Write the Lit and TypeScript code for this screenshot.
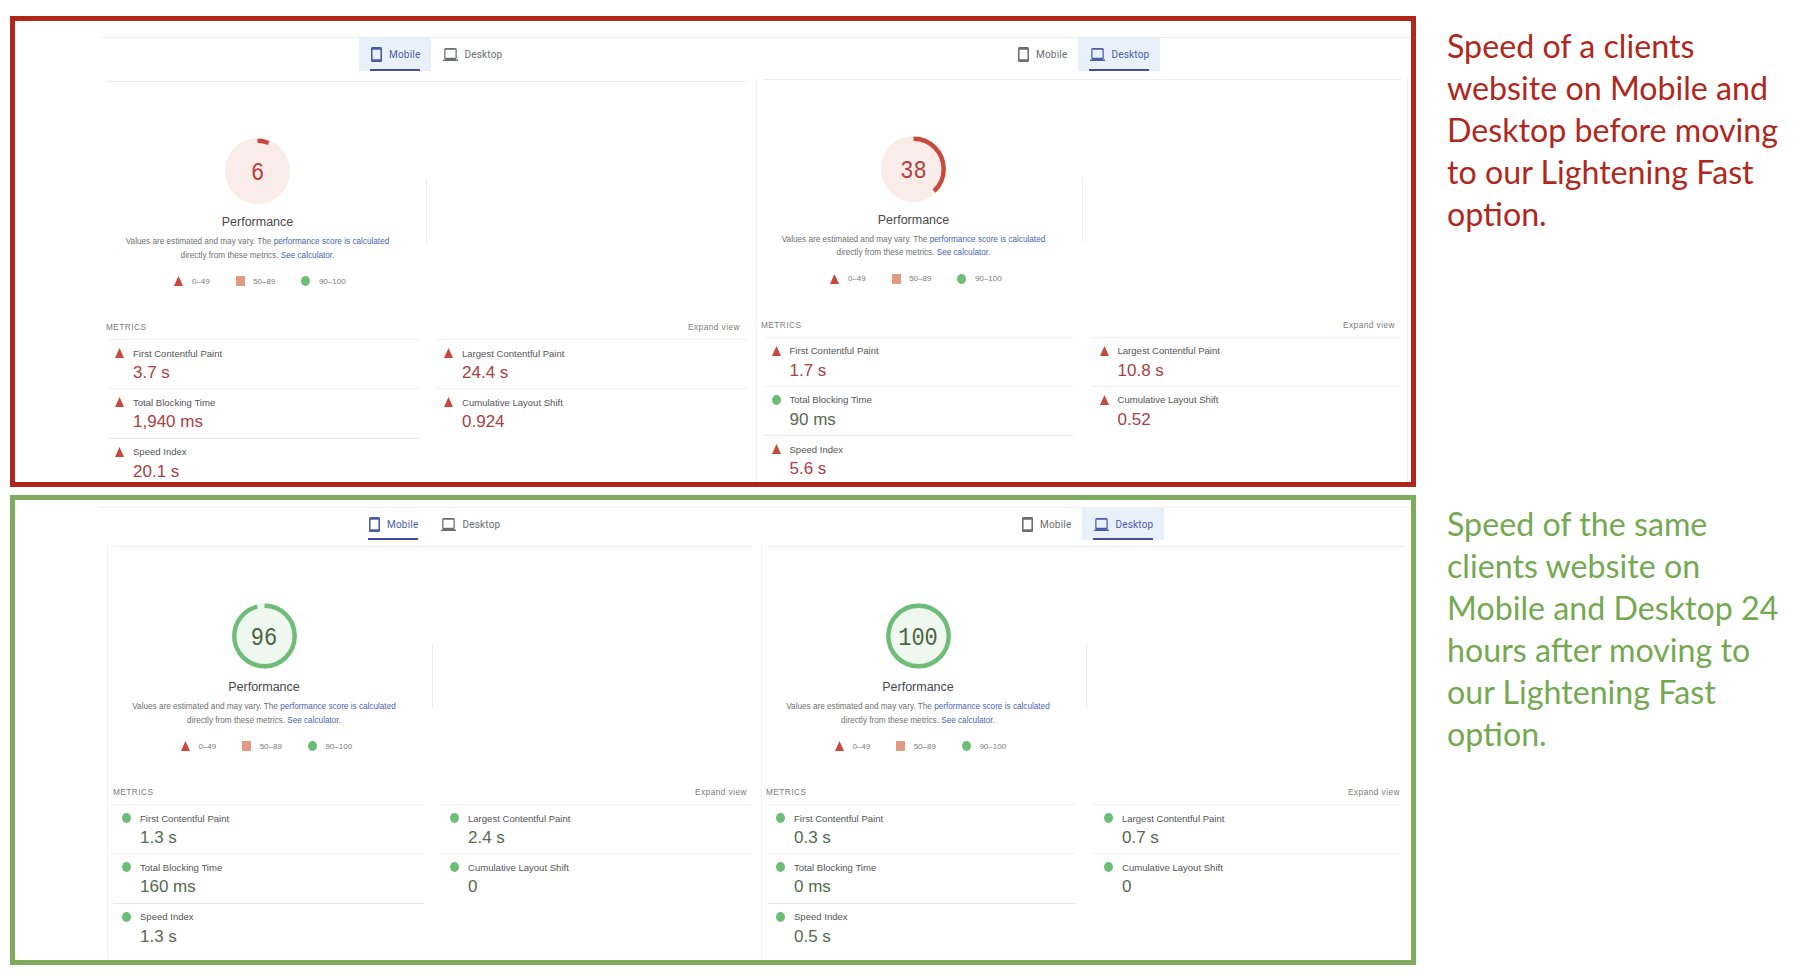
import { LitElement, html, css, svg } from 'lit';
import { customElement, property } from 'lit/decorators.js';

type Status = 'fail' | 'pass';
interface Metric { label: string; value: string; status: Status; }
interface Report { variant: string; device: 'mobile' | 'desktop'; score: number; metrics: Metric[]; }

const fail = (label: string, value: string): Metric => ({ label, value, status: 'fail' });
const pass = (label: string, value: string): Metric => ({ label, value, status: 'pass' });

const NAMES = ['First Contentful Paint', 'Largest Contentful Paint', 'Total Blocking Time', 'Cumulative Layout Shift', 'Speed Index'];

const BEFORE: Report[] = [
  { variant: 'r1', device: 'mobile', score: 6, metrics: ['3.7 s', '24.4 s', '1,940 ms', '0.924', '20.1 s'].map((v, i) => fail(NAMES[i], v)) },
  {
    variant: 'r2', device: 'desktop', score: 38,
    metrics: [fail(NAMES[0], '1.7 s'), fail(NAMES[1], '10.8 s'), pass(NAMES[2], '90 ms'), fail(NAMES[3], '0.52'), fail(NAMES[4], '5.6 s')],
  },
];
const AFTER: Report[] = [
  { variant: 'g1', device: 'mobile', score: 96, metrics: ['1.3 s', '2.4 s', '160 ms', '0', '1.3 s'].map((v, i) => pass(NAMES[i], v)) },
  { variant: 'g2', device: 'desktop', score: 100, metrics: ['0.3 s', '0.7 s', '0 ms', '0', '0.5 s'].map((v, i) => pass(NAMES[i], v)) },
];

const triangle = html`<svg class="mark" viewBox="0 0 9 10"><polygon points="4.5,0 9,10 0,10" fill="#c8483c"></polygon></svg>`;
const square = html`<svg class="mark" viewBox="0 0 9 10"><rect width="9" height="10" fill="#e09b82"></rect></svg>`;
const circle = html`<svg class="mark" viewBox="0 0 9 10"><ellipse cx="4.5" cy="5" rx="4.5" ry="5" fill="#6cbd78"></ellipse></svg>`;

const phoneIcon = svg`<svg class="phone" viewBox="5 1 14 22" preserveAspectRatio="none"><path fill="currentColor" d="M17 1.01L7 1c-1.1 0-2 .9-2 2v18c0 1.1.9 2 2 2h10c1.1 0 2-.9 2-2V3c0-1.1-.9-1.99-2-1.99zM17 19H7V5h10v14z"></path></svg>`;
const laptopIcon = svg`<svg class="laptop" viewBox="0 4 24 16" preserveAspectRatio="none"><path fill="currentColor" d="M20 18c1.1 0 1.99-.9 1.99-2L22 6c0-1.1-.9-2-2-2H4c-1.1 0-2 .9-2 2v10c0 1.1.9 2 2 2H0v2h24v-2h-4zM4 6h16v10H4V6z"></path></svg>`;

@customElement('psi-report')
export class PsiReport extends LitElement {
  static styles = css`
    :host { display: block; font-family: "Liberation Sans", Arial, sans-serif; }

    .report { height: 100%; }
    .r1 { width: 741px; --tabs-x: 344px; --tabs-h: 33px; --body-x: 91px; --body-w: 650px; --rule-top: 10px; --rule-l: 0px; --rule-w: 639px; --score-x: 0.5px; --head-l: -1px; --grid-l: 1px; --col: 312px; --gap: 16px; --pad: 7px; --pad2: 8px; }
    .r2 { width: 655px; --tabs-x: 250px; --tabs-h: 33px; --body-x: 0px; --body-w: 652px; --rule-top: 7.5px; --rule-l: 6px; --rule-w: 638px; --score-x: 6.5px; --head-l: 4px; --grid-l: 7.5px; --col: 308px; --gap: 19.5px; --pad: 7px; --pad2: 7.5px; }
    .g1 { width: 746px; --tabs-x: 342px; --tabs-h: 32px; --body-x: 92px; --body-w: 654px; --rule-top: 6px; --rule-l: 5px; --rule-w: 639px; --score-x: 6px; --head-l: 5px; --grid-l: 5px; --col: 311px; --gap: 16px; --pad: 9px; --pad2: 10px; }
    .g2 { width: 650px; --tabs-x: 249px; --tabs-h: 32px; --body-x: 0px; --body-w: 650px; --rule-top: 6px; --rule-l: 6px; --rule-w: 637px; --score-x: 6px; --head-l: 4px; --grid-l: 6px; --col: 308px; --gap: 17px; --pad: 8px; --pad2: 11px; }

    .tabs { display: flex; height: var(--tabs-h); margin-left: var(--tabs-x); }
    .tab {
      position: relative;
      display: flex;
      align-items: center;
      box-sizing: border-box;
      padding: 0 11px 0 12px;
      font-family: Roboto, sans-serif;
      font-size: 10px;
      letter-spacing: 0.2px;
      color: #6a6d72;
    }
    .tab.on { color: #4c5da8; background: #e8f0fa; }
    .g1 .tab.on { background: none; }
    .tab.on::after { content: ""; position: absolute; left: 11px; right: 11px; bottom: 0; height: 2.5px; background: #44509b; }
    .phone { width: 11px; height: 15px; margin-right: 7px; }
    .laptop { width: 15px; height: 13px; margin-right: 6px; }

    .body {
      box-sizing: border-box;
      width: var(--body-w);
      margin-left: var(--body-x);
      height: 500px;
      border-left: 1px solid #f1f1f3;
    }
    .r1 .body { border-left-color: #fff; }
    .r2 .body { border-right: 1px solid #eef0f4; }
    .rule {
      width: var(--rule-w);
      height: 1px;
      margin: var(--rule-top) 0 0 var(--rule-l);
      background: #ececec;
    }

    .summary { display: flex; margin-left: var(--score-x); }
    .score { width: 300px; flex: none; display: flex; flex-direction: column; align-items: center; padding-top: 56px; }
    .divider { width: 1px; height: 64px; margin: 97px 0 0 18px; background: #ececec; }

    .gauge { position: relative; width: 65px; height: 66px; }
    .gauge svg { display: block; width: 65px; height: 66px; }
    .gauge span {
      position: absolute;
      inset: 5px 0 0;
      display: flex;
      align-items: center;
      justify-content: center;
      font-family: "Liberation Mono", monospace;
      font-size: 22px;
      transform: scaleY(1.17);
    }
    .gauge.fail span { color: #b4403f; }
    .gauge.pass span { color: #4a6642; }

    .title { margin-top: 10px; font-size: 12.5px; line-height: 16px; color: #4a4a4a; }
    .desc { margin-top: 5px; font-size: 8.2px; line-height: 13.5px; text-align: center; color: #707070; white-space: nowrap; }
    .desc a { color: #4a63b0; text-decoration: none; }

    .legend { display: flex; align-items: center; height: 12px; margin-top: 13px; padding-left: 5px; font-size: 8px; color: #7a7a7a; }
    .legend div { display: flex; align-items: center; gap: 8.5px; margin-right: 26px; }
    .legend div:last-child { margin-right: 0; }
    .mark { display: block; width: 9px; height: 10px; flex: none; }

    .head {
      display: flex;
      justify-content: space-between;
      width: 634px;
      height: 12px;
      margin: 34px 0 6px var(--head-l);
      font-size: 8.3px;
      line-height: 12px;
      letter-spacing: 0.45px;
      color: #7c7c7c;
    }
    .grid {
      display: grid;
      grid-template-columns: var(--col) var(--col);
      grid-auto-rows: 49.33px;
      column-gap: var(--gap);
      margin: 0 0 0 var(--grid-l);
    }
    .metric {
      box-sizing: border-box;
      padding: 7px 0 0 var(--pad);
      border-top: 1px solid #f0f0f0;
    }
    .metric:nth-child(even) { padding-left: var(--pad2); }
    .metric:nth-child(n + 5) { border-top-color: #e8e8e8; }
    .name { display: flex; align-items: center; gap: 9px; height: 12px; font-size: 9.55px; color: #555; white-space: nowrap; }
    .value { margin: 4px 0 0 18px; font-size: 17px; line-height: 20px; white-space: nowrap; }
    .fail .value { color: #aa4044; }
    .pass .value { color: #556b4f; }
  `;

  @property({ type: Object }) report!: Report;

  private _gauge() {
    const { score } = this.report;
    const tone = score >= 90 ? 'pass' : 'fail';
    const r = 30.2;
    const len = 2 * Math.PI * r;
    const stroke = tone === 'pass' ? '#6fbc78' : '#c9493c';
    const fill = tone === 'pass' ? '#eef8ef' : '#f9ece9';
    return html`<div class="gauge ${tone}">
      <svg viewBox="0 0 65 66">
        <ellipse cx="32.5" cy="33" rx="32.5" ry="33" fill=${fill}></ellipse>
        <circle cx="32.5" cy="33" r=${r} fill="none" stroke=${stroke} stroke-width="4.4"
          stroke-dasharray="${(len * score) / 100} ${len}" transform="rotate(-90 32.5 33)"></circle>
      </svg>
      <span>${score}</span>
    </div>`;
  }

  render() {
    const { variant, device, metrics } = this.report;
    return html`
      <div class="report ${variant}">
        <div class="tabs">
          <div class="tab ${device === 'mobile' ? 'on' : ''}">${phoneIcon}Mobile</div>
          <div class="tab ${device === 'desktop' ? 'on' : ''}">${laptopIcon}Desktop</div>
        </div>
        <div class="body">
          <div class="rule"></div>
          <div class="summary">
            <div class="score">
              ${this._gauge()}
              <div class="title">Performance</div>
              <div class="desc">
                Values are estimated and may vary. The <a>performance score is calculated</a><br />
                directly from these metrics. <a>See calculator.</a>
              </div>
              <div class="legend">
                <div>${triangle}0–49</div>
                <div>${square}50–89</div>
                <div>${circle}90–100</div>
              </div>
            </div>
            <div class="divider"></div>
          </div>
          <div class="head"><span>METRICS</span><span>Expand view</span></div>
          <div class="grid">
            ${metrics.map(
              (m) => html`<div class="metric ${m.status}">
                <div class="name">${m.status === 'fail' ? triangle : circle}${m.label}</div>
                <div class="value">${m.value}</div>
              </div>`
            )}
          </div>
        </div>
      </div>
    `;
  }
}

@customElement('app-root')
export class AppRoot extends LitElement {
  static styles = css`
    :host { display: block; width: 1800px; height: 979px; background: #fff; overflow: hidden; }

    .page { display: flex; flex-direction: column; gap: 8px; padding: 16px 0 0 10px; }
    .band { display: flex; }

    .frame {
      box-sizing: border-box;
      width: 1406px;
      border: 5px solid;
      overflow: hidden;
    }
    .before .frame { height: 471px; border-color: #b1261b; }
    .after .frame { height: 470px; border-color: #7fab5e; }

    .top-line { height: 1px; background: #ececec; }
    .before .top-line { margin: 16px 0 0 87px; }
    .after .top-line { margin: 7px 0 0 85px; }
    .reports { display: flex; }

    .note {
      margin: 0;
      padding-left: 31px;
      font-family: Lato, "Open Sans", sans-serif;
      font-size: 32.2px;
      line-height: 42px;
      white-space: nowrap;
    }
    .before .note { padding-top: 8.5px; color: #b0281d; }
    .after .note { padding-top: 8px; color: #74a952; }
  `;

  private _frame(reports: Report[]) {
    return html`<div class="frame">
      <div class="top-line"></div>
      <div class="reports">${reports.map((r) => html`<psi-report .report=${r}></psi-report>`)}</div>
    </div>`;
  }

  render() {
    return html`
      <div class="page">
        <section class="band before">
          ${this._frame(BEFORE)}
          <p class="note">Speed of a clients<br />website on Mobile and<br />Desktop before moving<br />to our Lightening Fast<br />option.</p>
        </section>
        <section class="band after">
          ${this._frame(AFTER)}
          <p class="note">Speed of the same<br />clients website on<br />Mobile and Desktop 24<br />hours after moving to<br />our Lightening Fast<br />option.</p>
        </section>
      </div>
    `;
  }
}

declare global {
  interface HTMLElementTagNameMap {
    'app-root': AppRoot;
    'psi-report': PsiReport;
  }
}
